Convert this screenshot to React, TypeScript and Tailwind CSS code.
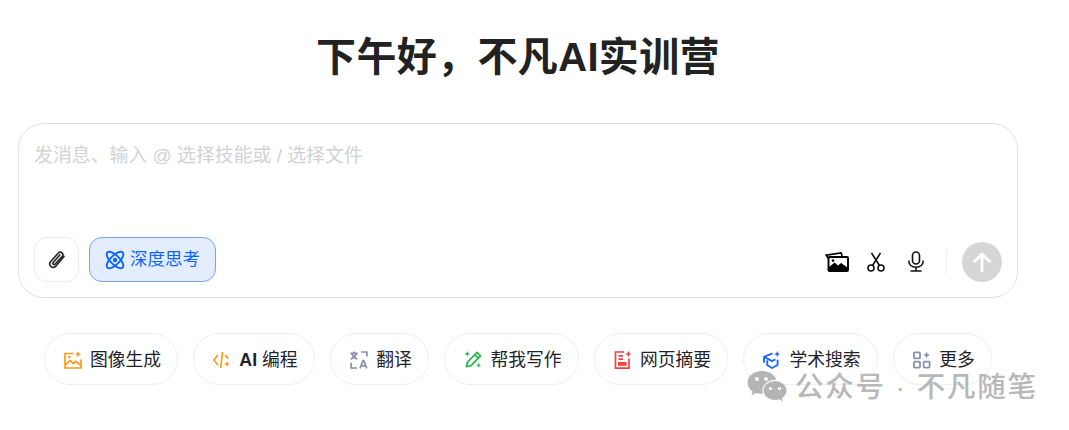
import React from "react";

const font = { fontFamily: '"Liberation Sans", "Noto Sans CJK SC", sans-serif' };

function ImageSpark() {
  return (
    <svg width="18" height="18" viewBox="0 0 18 18" fill="none" stroke="#FF9A17" strokeWidth="1.7">
      <path d="M9.500 2.500H1v14.500h16V8.500" />
      <path d="M1.300 14 6 9.500l3.200 3 2.600-2.200 5 4" />
      <circle cx="5.300" cy="6" r="1.200" fill="#FF9A17" stroke="none" />
      <path d="M14 0l.9 2.300 2.300.9-2.300.9-.9 2.300-.9-2.300-2.300-.9 2.300-.9z" fill="#FF9A17" stroke="none" />
    </svg>
  );
}
function CodeSpark() {
  return (
    <svg width="18" height="18" viewBox="0 0 18 18" fill="none" stroke="#FF9A17" strokeWidth="1.7">
      <path d="M5 4 .8 9 5 14" />
      <path d="M9.500 1 7.700 17" />
      <path d="M12.300 4 15.200 7.600" />
      <path d="M14 10l.9 2.200 2.300.9-2.300.9-.9 2.300-.9-2.300-2.300-.9 2.300-.9z" fill="#FF9A17" stroke="none" />
    </svg>
  );
}
function Translate() {
  return (
    <svg width="18" height="18" viewBox="0 0 18 18" fill="none" stroke="#8A8FB0" strokeWidth="1.7">
      <path d="M.4 2.400h7.400M4.100.4v2M6.400 2.600C5.600 5 3.400 7 .8 8.200M1.800 2.800C2.800 5 4.600 7 7.200 8.200" />
      <path d="M11 1h5.900v4.600M7 17H1.100v-5.200" />
      <path d="M10 17.400l3-7.800h.8l3 7.800M11 14.800h5" />
    </svg>
  );
}
function PenSpark() {
  return (
    <svg width="18" height="18" viewBox="0 0 18 18" fill="none" stroke="#2DB84F" strokeWidth="1.800">
      <path d="M13 1.400 16.500 5 7 14.700l-4.500 1 1-4.600z" strokeLinejoin="round" />
      <path d="M11 3.800l3.200 3.300" />
      <path d="M3.300 0l.8 2.100 2.100.8-2.100.8-.8 2.100-.8-2.100L.4 2.900l2.100-.8z" fill="#2DB84F" stroke="none" />
      <path d="M14.600 11.800l.7 1.800 1.800.7-1.800.7-.7 1.800-.7-1.800-1.800-.7 1.800-.7z" fill="#2DB84F" stroke="none" />
    </svg>
  );
}
function DocSpark() {
  return (
    <svg width="18" height="18" viewBox="0 0 18 18" fill="none" stroke="#F5413D" strokeWidth="1.700">
      <path d="M10 1H1.500v16.200h13.500V7.500" />
      <path d="M4.500 4.800h4.500M4.500 8.200h4.500" />
      <rect x="4" y="11" width="8.600" height="3.800" fill="#F5413D" stroke="none" />
      <path d="M14.400 0l.9 2.100 2.100.9-2.100.9-.9 2.100-.9-2.100-2.100-.9 2.100-.9z" fill="#F5413D" stroke="none" />
    </svg>
  );
}
function CapSpark() {
  return (
    <svg width="18" height="18" viewBox="0 0 18 18" fill="none" stroke="#1F6BFF" strokeWidth="1.900">
      <path d="M9.500 2.400 1 6v5.800" />
      <path d="M1.500 6.200 9 10.200l3.400-1.800" />
      <path d="M4.200 9.300v4.700L9 17l5.600-3V8.800" />
      <path d="M14.200 0l.9 2.200 2.200.9-2.200.9-.9 2.200-.9-2.200-2.200-.9 2.200-.9z" fill="#1F6BFF" stroke="none" />
    </svg>
  );
}
function GridSpark() {
  return (
    <svg width="18" height="18" viewBox="0 0 18 18" fill="none" stroke="#8A8FB0" strokeWidth="1.800">
      <rect x="1" y="1.400" width="6" height="6" rx="1" />
      <rect x="1" y="10.600" width="6" height="6" rx="1" />
      <rect x="10.600" y="10.600" width="6" height="6" rx="1" />
      <path d="M13.600.6l1 2.500 2.500 1-2.500 1-1 2.500-1-2.500-2.500-1 2.500-1z" fill="#8A8FB0" stroke="none" />
    </svg>
  );
}
function Atom() {
  return (
    <svg width="20" height="20" viewBox="0 0 20 20" fill="none" stroke="#0E66F5" strokeWidth="1.900">
      <ellipse cx="10" cy="10" rx="4.500" ry="10.800" transform="rotate(45 10 10)" />
      <ellipse cx="10" cy="10" rx="4.500" ry="10.800" transform="rotate(-45 10 10)" />
      <circle cx="10" cy="10" r="2.200" fill="#0E66F5" stroke="none" />
    </svg>
  );
}
function Clip() {
  return (
    <svg width="18" height="18" viewBox="0 0 18 18" fill="none" stroke="#2b2b2b" strokeWidth="1.700" strokeLinecap="round">
      <path d="M16 5.500 8 15a3.300 3.300 0 0 1-5.300.2c-1.300-1.400-1.200-3.300 0-4.700L10.400 2a2.500 2.500 0 0 1 3.700-.1 2.500 2.500 0 0 1 .2 3.400L7 13.200a1.200 1.200 0 0 1-1.800 0 1.300 1.300 0 0 1 0-1.700L11.800 4" />
    </svg>
  );
}
function Photos() {
  return (
    <svg width="24" height="20" viewBox="0 0 24 20" fill="none">
      <path d="M3.500 6.500 1.200 3.200 16 .9l1.200 3" stroke="#000" strokeWidth="1.700" />
      <rect x="3.500" y="5" width="19.500" height="14" rx="1" stroke="#000" strokeWidth="1.900" />
      <path d="M4 18.500v-3.500l5.500-4.500 3.500 3 3-2.500 6.500 4.500v3z" fill="#000" />
      <circle cx="8" cy="8.600" r="1.300" fill="#000" />
    </svg>
  );
}
function Scissors() {
  return (
    <svg width="18" height="20" viewBox="0 0 18 20" fill="none" stroke="#111" strokeWidth="1.600">
      <circle cx="4" cy="16" r="3" />
      <circle cx="14" cy="16" r="3" />
      <path d="M5.500 13.500 13.500 1M12.500 13.500 4.500 1" />
    </svg>
  );
}
function Mic() {
  return (
    <svg width="18" height="21" viewBox="0 0 18 21" fill="none" stroke="#111" strokeWidth="1.600">
      <rect x="5.500" y="1" width="7" height="12" rx="3.500" />
      <path d="M1.800 9.500c0 4.300 3 6.800 7.200 6.800s7.200-2.500 7.200-6.800M9 16.300v3.500M3.500 20h11" />
    </svg>
  );
}
function Wechat() {
  return (
    <svg width="40" height="34" viewBox="0 0 40 34" fill="#b4b4b4">
      <path d="M14.500 1C6.700 1 .5 6.200.5 12.500c0 3.600 2 6.800 5.200 8.900L4.400 25.500l4.700-2.500c1.700.5 3.500.8 5.400.8.500 0 1 0 1.400-.1-.3-1-.5-2-.5-3.100 0-6 5.600-10.800 12.800-10.800h1.100C28.400 4.800 22 1 14.500 1z" />
      <path d="M39.500 20.500c0-5.200-5.200-9.500-11.500-9.500s-11.500 4.300-11.500 9.500S21.700 30 28 30c1.500 0 3-.3 4.300-.7l3.700 2.200-1-3.500c2.800-1.800 4.500-4.500 4.500-7.500z" />
      <circle cx="10" cy="9" r="1.900" fill="#fff" />
      <circle cx="19" cy="9" r="1.900" fill="#fff" />
      <circle cx="23.500" cy="18.500" r="1.600" fill="#fff" />
      <circle cx="32.500" cy="18.500" r="1.600" fill="#fff" />
    </svg>
  );
}

const chips: { icon: React.ReactNode; label: React.ReactNode; w: string; key: string }[] = [
  { key: "a", icon: <ImageSpark />, label: "图像生成", w: "w-[134px]" },
  { key: "b", icon: <CodeSpark />, label: <><span className="font-semibold">AI</span> 编程</>, w: "w-[122px]" },
  { key: "c", icon: <Translate />, label: "翻译", w: "w-[99px]" },
  { key: "d", icon: <PenSpark />, label: "帮我写作", w: "w-[135px]" },
  { key: "e", icon: <DocSpark />, label: "网页摘要", w: "w-[134px]" },
  { key: "f", icon: <CapSpark />, label: "学术搜索", w: "w-[135px]" },
  { key: "g", icon: <GridSpark />, label: "更多", w: "w-[99px]" },
];

export default function App() {
  return (
    <div className="relative h-[430px] w-[1069px] overflow-hidden bg-white pl-[18px]" style={font}>
      <div className="flex w-[1000px] flex-col items-center">
        <h1 className="mt-[32px] h-[50px] text-[40px] font-bold leading-[50px] tracking-[0.35px] text-[#222222]">下午好，不凡AI实训营</h1>
        <div className="mt-[41px] flex h-[175px] w-full flex-col justify-between rounded-[26px] border border-[#e1e1e1] bg-white pb-[15px] pl-[15px] pr-[15px] pt-[18px]">
          <div className="text-[18.900px] leading-[27px] text-[#d2d2d2]">发消息、输入 @ 选择技能或 / 选择文件</div>
          <div className="flex items-end justify-between">
            <div className="flex items-center gap-[10px]">
              <div className="flex h-[45px] w-[45px] items-center justify-center rounded-[13px] border border-[#ececec]">
                <Clip />
              </div>
              <div className="flex h-[45px] w-[127px] items-center justify-center gap-[5px] rounded-[13px] border border-[#76a3ec] bg-[#e4edfd] text-[17.500px] text-[#0e66f5]">
                <Atom />
                <span>深度思考</span>
              </div>
            </div>
            <div className="flex items-center">
              <div className="flex w-[121px] items-center pb-[1px] pr-[21px]">
                <Photos />
                <div className="ml-[18px]">
                  <Scissors />
                </div>
                <div className="ml-[22px]">
                  <Mic />
                </div>
              </div>
              <div className="h-[24px] w-px bg-[#eeeeee]" />
              <div className="ml-[15px] flex h-[40px] w-[40px] items-center justify-center rounded-full bg-[#d6d6d6]">
                <svg width="22" height="22" viewBox="0 0 22 22" fill="none" stroke="#fff" strokeWidth="2.800" strokeLinecap="round" strokeLinejoin="round">
                  <path d="M11 20V3M3.500 10.500 11 3l7.500 7.500" />
                </svg>
              </div>
            </div>
          </div>
        </div>
        <div className="mt-[35px] flex items-center gap-[15px]">
          {chips.map((c) => (
            <div key={c.key} className={`flex h-[52px] items-center justify-center gap-[8px] rounded-full border border-[#efefef] bg-white pl-[3px] pt-[2px] text-[17.800px] text-[#1f2329] ${c.w}`}>
              {c.icon}
              <span className="pt-[1px]">{c.label}</span>
            </div>
          ))}
        </div>
      </div>
      <div className="absolute left-[747px] top-[369px] flex items-center gap-[8px] text-[28.500px] font-medium leading-[36px] tracking-[1.800px] text-[#b8b8b8]">
        <Wechat />
        <span>公众号 · 不凡随笔</span>
      </div>
    </div>
  );
}
